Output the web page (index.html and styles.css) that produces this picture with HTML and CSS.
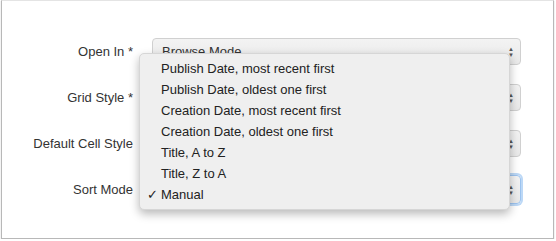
FILE: index.html
```html
<!DOCTYPE html>
<html lang="en">
<head>
    <meta charset="UTF-8">
    <meta name="viewport" content="width=device-width, initial-scale=1.0">
    <title>Grid Settings</title>
    <link rel="stylesheet" href="styles.css">
</head>
<body>
    <div class="panel">
        <div class="row">
            <label class="field-label">Open In *</label>
            <div class="select-box"><span>Browse Mode</span><span class="arrows">&#9650;<br>&#9660;</span></div>
        </div>
        <div class="row">
            <label class="field-label">Grid Style *</label>
            <div class="select-box"><span></span><span class="arrows">&#9650;<br>&#9660;</span></div>
        </div>
        <div class="row">
            <label class="field-label">Default Cell Style</label>
            <div class="select-box"><span></span><span class="arrows">&#9650;<br>&#9660;</span></div>
        </div>
        <div class="row">
            <label class="field-label">Sort Mode</label>
            <!-- value hidden under the open list -->
            <div class="select-box focused"><span></span><span class="arrows">&#9650;<br>&#9660;</span></div>
        </div>

        <!-- open sort mode list -->
        <ul class="menu">
            <li>Publish Date, most recent first</li>
            <li>Publish Date, oldest one first</li>
            <li>Creation Date, most recent first</li>
            <li>Creation Date, oldest one first</li>
            <li>Title, A to Z</li>
            <li>Title, Z to A</li>
            <li class="checked">Manual</li>
        </ul>
    </div>
</body>
</html>
```

FILE: styles.css
```css
*{
    box-sizing: border-box;
}
body{
    margin: 0;
    background-color: #ffffff;
    font-family: 'Liberation Sans', Arial, sans-serif;
    font-size: 13px;
    color: #333333;
}
.panel{
    position: relative;
    margin: 0 2px 0 1px;
    height: 239px;
    border: 1px solid #b8b8b8;
    border-top-color: #e4e4e4;
    box-shadow: 0 1px 1px rgba(0, 0, 0, 0.25);
    padding-top: 37px;
}
.row{
    display: flex;
    align-items: center;
    height: 27px;
    margin-bottom: 19px;
}
.row:nth-child(4){
    margin-top: -1px;
    height: 29px;
}
.field-label{
    width: 131px;
    text-align: right;
    margin-right: 19px;
    color: #333333;
}
.select-box{
    display: flex;
    align-items: center;
    justify-content: space-between;
    width: 369px;
    height: 100%;
    padding: 0 6px 0 9px;
    border: 1px solid #d0d0d0;
    border-radius: 4px;
    background: linear-gradient(#f3f3f3, #e9e9e9);
    color: #333333;
}
.select-box.focused{
    border-color: #9cc3ef;
    box-shadow: 0 0 0 2px #bcd8f6;
}
.arrows{
    font-size: 6px;
    line-height: 6px;
    color: #555555;
    text-align: center;
}
.menu{
    position: absolute;
    left: 137px;
    top: 52px;
    width: 371px;
    margin: 0;
    padding: 4px 0 4px 0;
    list-style: none;
    background-color: #efefef;
    border: 1px solid #d6d6d6;
    border-radius: 5px;
    box-shadow: 0 4px 10px rgba(0, 0, 0, 0.28);
}
.menu li{
    height: 21px;
    line-height: 21px;
    padding-left: 21px;
    color: #222222;
    font-size: 13px;
}
.menu li.checked{
    position: relative;
}
.menu li.checked::before{
    content: "\2713";
    position: absolute;
    left: 7px;
    font-size: 13px;
}
```
